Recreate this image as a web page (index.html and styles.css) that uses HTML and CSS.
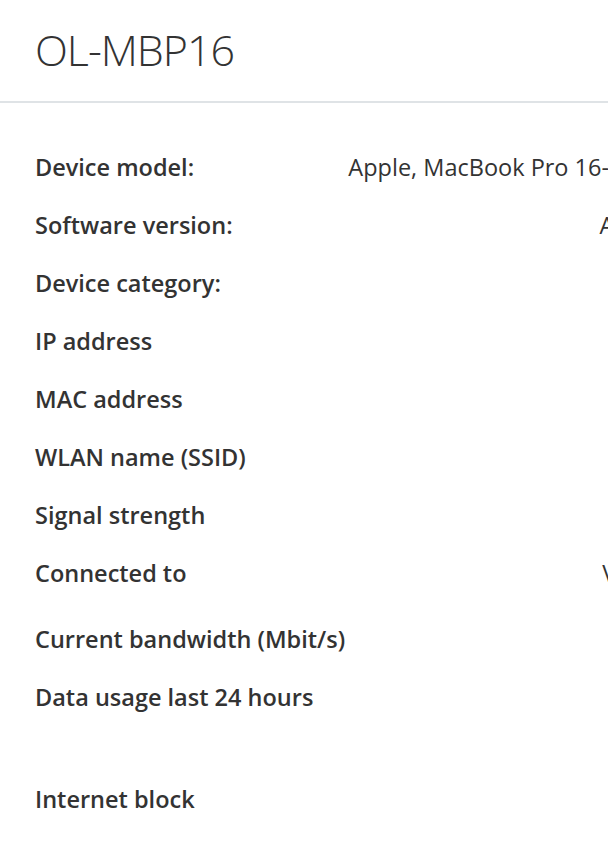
FILE: index.html
```html
<!DOCTYPE html>
<html lang="en">

<head>
    <meta charset="UTF-8">
    <title>OL-MBP16</title>
    <link rel="stylesheet" href="styles.css">
</head>

<body>

    <div class="page">
        <h1 class="title">OL-MBP16</h1>

        <div class="details">
            <div class="row">
                <span class="label">Device model:</span>
                <span class="value">Apple, MacBook Pro 16-inch, 2019</span>
            </div>
            <div class="row">
                <span class="label">Software version:</span>
                <span class="value">Apple, 12.4</span>
            </div>
            <div class="row">
                <span class="label">Device category:</span>
                <span class="value"></span>
            </div>
            <div class="row">
                <span class="label">IP address</span>
                <span class="value"></span>
            </div>
            <div class="row">
                <span class="label">MAC address</span>
                <span class="value"></span>
            </div>
            <div class="row">
                <span class="label">WLAN name (SSID)</span>
                <span class="value"></span>
            </div>
            <div class="row">
                <span class="label">Signal strength</span>
                <span class="value"></span>
            </div>
            <div class="row row-tall">
                <span class="label">Connected to</span>
                <span class="value">Vodafone1</span>
            </div>
            <div class="row">
                <span class="label">Current bandwidth (Mbit/s)</span>
                <span class="value"></span>
            </div>
            <div class="row row-usage">
                <span class="label">Data usage last 24 hours</span>
                <span class="value"></span>
            </div>
            <div class="row">
                <span class="label">Internet block</span>
                <span class="value"></span>
            </div>
        </div>
    </div>

</body>

</html>
```

FILE: styles.css
```css
html,
body {
    margin: 0;
    overflow: hidden;
    background: #fff;
}

body {
    font-family: "Open Sans", sans-serif;
    color: #333;
}

.page {
    width: 756px;
}

.title {
    margin: 0;
    padding: 22px 35px 23px;
    font-size: 43px;
    font-weight: 300;
    letter-spacing: -1px;
    line-height: 56px;
    border-bottom: 2px solid #dfe3e6;
}

.details {
    padding: 49px 35px 0;
}

.row {
    display: flex;
    justify-content: space-between;
    height: 58px;
    font-size: 23.5px;
    line-height: 30px;
}

.row-tall {
    height: 66px;
}

.row-usage {
    height: 102px;
}

.label {
    font-weight: 600;
}

.value {
    text-align: right;
}
```
